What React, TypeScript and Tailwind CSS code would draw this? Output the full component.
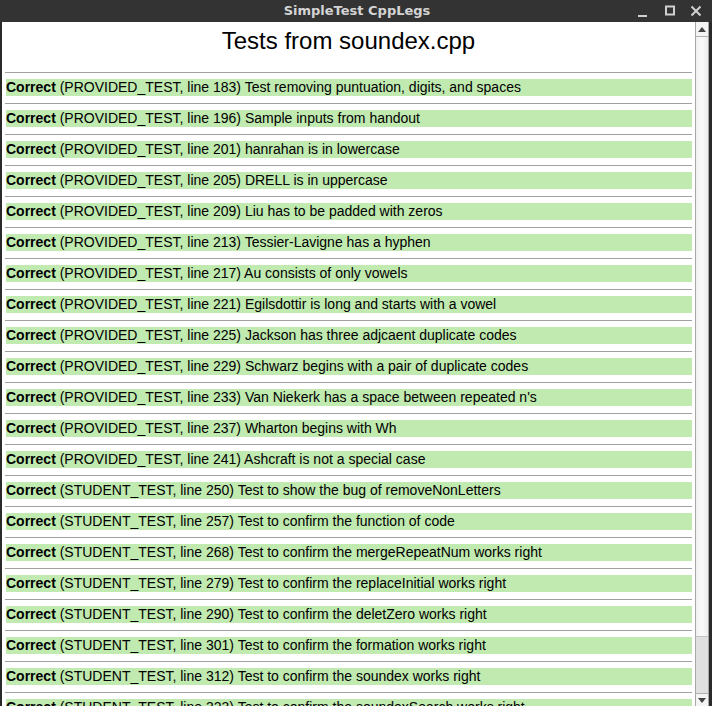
const rows: [string, number, string][] = [
  ['PROVIDED_TEST', 183, 'Test removing puntuation, digits, and spaces'],
  ['PROVIDED_TEST', 196, 'Sample inputs from handout'],
  ['PROVIDED_TEST', 201, 'hanrahan is in lowercase'],
  ['PROVIDED_TEST', 205, 'DRELL is in uppercase'],
  ['PROVIDED_TEST', 209, 'Liu has to be padded with zeros'],
  ['PROVIDED_TEST', 213, 'Tessier-Lavigne has a hyphen'],
  ['PROVIDED_TEST', 217, 'Au consists of only vowels'],
  ['PROVIDED_TEST', 221, 'Egilsdottir is long and starts with a vowel'],
  ['PROVIDED_TEST', 225, 'Jackson has three adjcaent duplicate codes'],
  ['PROVIDED_TEST', 229, 'Schwarz begins with a pair of duplicate codes'],
  ['PROVIDED_TEST', 233, "Van Niekerk has a space between repeated n's"],
  ['PROVIDED_TEST', 237, 'Wharton begins with Wh'],
  ['PROVIDED_TEST', 241, 'Ashcraft is not a special case'],
  ['STUDENT_TEST', 250, 'Test to show the bug of removeNonLetters'],
  ['STUDENT_TEST', 257, 'Test to confirm the function of code'],
  ['STUDENT_TEST', 268, 'Test to confirm the mergeRepeatNum works right'],
  ['STUDENT_TEST', 279, 'Test to confirm the replaceInitial works right'],
  ['STUDENT_TEST', 290, 'Test to confirm the deletZero works right'],
  ['STUDENT_TEST', 301, 'Test to confirm the formation works right'],
  ['STUDENT_TEST', 312, 'Test to confirm the soundex works right'],
  ['STUDENT_TEST', 323, 'Test to confirm the soundexSearch works right'],
];

function TitleBar() {
  return (
    <div className="h-[22px] shrink-0 bg-[#333333] flex items-center relative">
      <div className="flex-1 text-center text-[13px] font-bold text-[#d4d4d4] leading-[22px] [font-family:'DejaVu_Sans',sans-serif] pl-[2px]">
        SimpleTest CppLegs
      </div>
      <div className="absolute right-0 top-0 h-[22px] flex items-center">
        <svg width="12" height="12" viewBox="0 0 12 12" className="mr-[15px] mt-[2px]">
          <rect x="1" y="9" width="9" height="2" fill="#d0d0d0" />
        </svg>
        <svg width="12" height="12" viewBox="0 0 12 12" className="mr-[14px]">
          <rect x="2" y="1.5" width="8" height="8" fill="none" stroke="#d0d0d0" strokeWidth="2" />
        </svg>
        <svg width="12" height="12" viewBox="0 0 12 12" className="mr-[10px]">
          <path d="M1.5 1.5 L10.5 10.5 M10.5 1.5 L1.5 10.5" stroke="#d0d0d0" strokeWidth="2" />
        </svg>
      </div>
    </div>
  );
}

function Scrollbar() {
  return (
    <div className="w-[14px] shrink-0 border-l border-r border-[#a8a8a8] bg-[#e2e2e2] flex flex-col">
      <div className="h-[15px] shrink-0 bg-[#f4f4f4] border-b border-[#b0b0b0] flex items-center justify-center">
        <svg width="8" height="5" viewBox="0 0 8 5">
          <path d="M0 5 L4 0 L8 5 Z" fill="#444" />
        </svg>
      </div>
      <div className="h-[600px] shrink-0 bg-gradient-to-r from-[#f0f0f0] via-[#fbfbfb] to-[#ececec] border-b border-[#c4c4c4]" />
      <div className="flex-1 bg-[#e0e0e0]" />
      <div className="h-[13px] shrink-0 bg-[#f4f4f4] border-t border-[#b0b0b0] flex items-center justify-center">
        <svg width="8" height="5" viewBox="0 0 8 5">
          <path d="M0 0 L8 0 L4 5 Z" fill="#444" />
        </svg>
      </div>
    </div>
  );
}

export default function App() {
  return (
    <div className="w-[712px] h-[706px] flex flex-col overflow-hidden bg-[#2a2a2a] [font-family:'Liberation_Sans',Arial,sans-serif]">
      <TitleBar />
      <div className="flex-1 flex min-h-0 border-l-2 border-r-[3px] border-[#2a2a2a]">
        <div className="flex-1 min-w-0 bg-white overflow-hidden pl-[3px] pr-[3px]">
          <div className="h-[50px] pt-[5px] text-center text-[24px] leading-[28px] text-black">
            Tests from soundex.cpp
          </div>
          {rows.map(([kind, line, desc]) => (
            <div key={line} className="border-t border-[#a0a0a0] pt-[6px] pb-[7px]">
              <div className="h-[17px] ml-[1px] bg-[#c0eab0] text-[14px] leading-[17px] text-black whitespace-nowrap">
                <span className="font-bold">Correct</span> ({kind}, line {line}) {desc}
              </div>
            </div>
          ))}
        </div>
        <Scrollbar />
      </div>
    </div>
  );
}
